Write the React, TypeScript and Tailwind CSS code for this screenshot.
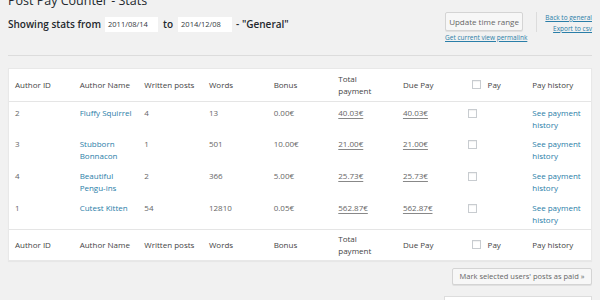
import React from "react";

const rows = [
  { id: "2", name: ["Fluffy Squirrel"], posts: "4", words: "13", bonus: "0.00€", total: "40.03€", due: "40.03€" },
  { id: "3", name: ["Stubborn", "Bonnacon"], posts: "1", words: "501", bonus: "10.00€", total: "21.00€", due: "21.00€" },
  { id: "4", name: ["Beautiful", "Pengu-ins"], posts: "2", words: "366", bonus: "5.00€", total: "25.73€", due: "25.73€" },
  { id: "1", name: ["Cutest Kitten"], posts: "54", words: "12810", bonus: "0.05€", total: "562.87€", due: "562.87€" },
];

function Box({ className = "" }: { className?: string }) {
  return <span className={"inline-block w-[9px] h-[9px] bg-white border border-[#c8ccd0] shadow-[inset_0_1px_1px_rgba(0,0,0,0.06)] " + className} />;
}

function HeadRow({ top }: { top: boolean }) {
  const cell = "px-[6px] align-middle font-normal text-left text-[#444]";
  return (
    <tr className={top ? "h-[32px] border-b border-[#e5e5e5]" : "h-[31px] border-t border-[#e5e5e5]"}>
      <th className={cell}>Author ID</th>
      <th className={cell}>Author Name</th>
      <th className={cell}>Written posts</th>
      <th className={cell}>Words</th>
      <th className={cell}>Bonus</th>
      <th className={cell}>Total<br />payment</th>
      <th className={cell}>Due Pay</th>
      <th className={cell}>
        <span className="flex items-center gap-[7px] pl-[4px]">
          <Box />
          <span>Pay</span>
        </span>
      </th>
      <th className={cell}>Pay history</th>
    </tr>
  );
}

export default function App() {
  return (
    <div
      className="w-[600px] h-[300px] overflow-hidden bg-[#f1f1f1] px-[8px] text-[#666]"
      style={{ fontFamily: '"Open Sans", "Noto Sans", sans-serif' }}
    >
      <div className="flex justify-between items-start h-[56px] border-b border-[#dcdcdc]">
        <div className="flex flex-col">
          <h2 className="text-[12.5px] leading-[16px] -mt-[7px] text-[#23282d] font-normal">Post Pay Counter - Stats</h2>
          <div className="flex items-center mt-[8px] text-[10px] font-semibold text-[#23282d]">
            <span>Showing stats from</span>
            <span className="ml-[4px] inline-flex items-center w-[53px] h-[15px] bg-white pl-[3px] text-[7.5px] font-normal text-[#32373c]">2011/08/14</span>
            <span className="ml-[5px]">to</span>
            <span className="ml-[5px] inline-flex items-center w-[54px] h-[15px] bg-white pl-[3px] text-[7.5px] font-normal text-[#32373c]">2014/12/08</span>
            <span className="ml-[4px]">- "General"</span>
          </div>
        </div>
        <div className="flex items-start pt-[12px]">
          <div className="flex flex-col items-start">
            <button className="h-[19px] w-[78px] bg-[#f7f7f7] border border-[#d4d4d4] rounded-[2px] text-[8px] text-[#666] leading-none shadow-[0_1px_0_#e0e0e0]">
              Update time range
            </button>
            <a className="mt-[2px] text-[6.5px] leading-[9px] text-[#2a7ea8] underline">Get current view permalink</a>
          </div>
          <div className="w-px h-[20px] bg-[#dcdcdc] ml-[9px] mr-[8px]" />
          <div className="flex flex-col items-end text-[6.5px] leading-[11px] text-[#2a7ea8]">
            <a className="underline">Back to general</a>
            <a className="underline">Export to csv</a>
          </div>
        </div>
      </div>

      <div className="mt-[12px] bg-white shadow-[0_1px_1px_rgba(0,0,0,0.04)] border border-[#e8e8e8]">
        <table className="w-full table-fixed border-collapse text-[8px] leading-[12px]">
          <thead>
            <HeadRow top={true} />
          </thead>
          <tbody>
            {rows.map((r) => (
              <tr key={r.id} className="h-[32px] align-top">
                <td className="px-[6px] pt-[5px]">{r.id}</td>
                <td className="px-[6px] pt-[5px] text-[#2a7ea8]">
                  {r.name.map((n, i) => (
                    <div key={i}>{n}</div>
                  ))}
                </td>
                <td className="px-[6px] pt-[5px]">{r.posts}</td>
                <td className="px-[6px] pt-[5px]">{r.words}</td>
                <td className="px-[6px] pt-[5px]">{r.bonus}</td>
                <td className="px-[6px] pt-[5px]">
                  <span className="underline decoration-[#888] underline-offset-[2px]">{r.total}</span>
                </td>
                <td className="px-[6px] pt-[5px]">
                  <span className="underline decoration-[#888] underline-offset-[2px]">{r.due}</span>
                </td>
                <td className="px-[6px] pt-[7px]">
                  <Box />
                </td>
                <td className="px-[6px] pt-[5px] text-[#2a7ea8]">
                  <div>See payment</div>
                  <div>history</div>
                </td>
              </tr>
            ))}
          </tbody>
          <tfoot>
            <HeadRow top={false} />
          </tfoot>
        </table>
      </div>

      <div className="flex justify-end mt-[7px]">
        <button className="h-[17px] w-[140px] bg-[#f7f7f7] border border-[#d4d4d4] rounded-[2px] text-[7.5px] text-[#666] leading-none shadow-[0_1px_0_#e0e0e0]">
          Mark selected users' posts as paid »
        </button>
      </div>
      <div className="flex justify-end mt-[11px]">
        <div className="w-[148px] h-[20px] bg-white border border-[#ddd]" />
      </div>
    </div>
  );
}
